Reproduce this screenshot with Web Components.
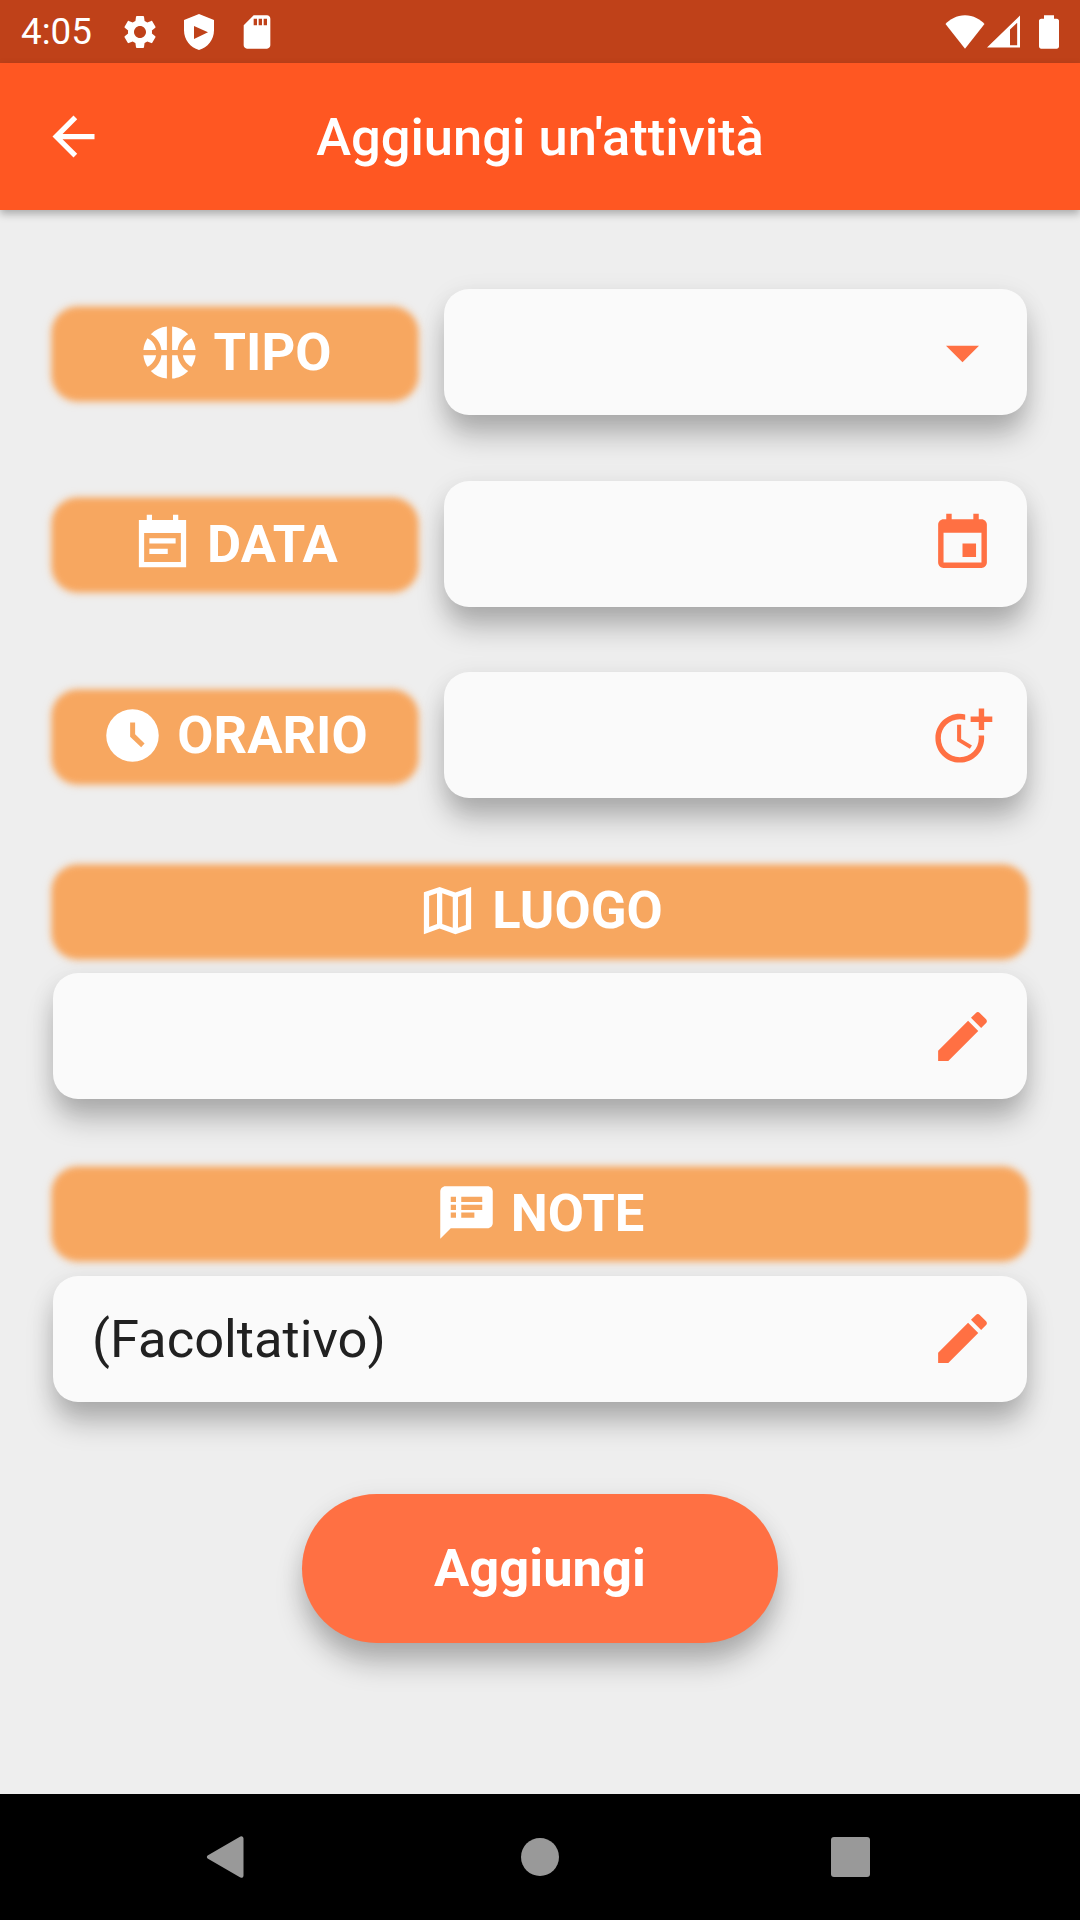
<!DOCTYPE html>
<html lang="it">
<head>
<meta charset="utf-8">
<title>Aggiungi un'attività</title>
<style>
  html, body { margin: 0; padding: 0; }
  body {
    width: 1080px;
    height: 1920px;
    overflow: hidden;
    display: flex;
    flex-direction: column;
    background: #eeeeee;
    font-family: Roboto, "Liberation Sans", sans-serif;
  }
  activity-form { flex: 1; }
</style>
</head>
<body>
<status-bar></status-bar>
<app-bar>Aggiungi un'attività</app-bar>
<activity-form>
  <form-row>
    <form-label icon="basketball" slot="label">TIPO</form-label>
    <form-field icon="dropdown" slot="field"></form-field>
  </form-row>
  <form-row>
    <form-label icon="eventnote" slot="label">DATA</form-label>
    <form-field icon="event" slot="field"></form-field>
  </form-row>
  <form-row>
    <form-label icon="clock" slot="label">ORARIO</form-label>
    <form-field icon="moretime" slot="field"></form-field>
  </form-row>
  <form-row stacked>
    <form-label icon="map" slot="label">LUOGO</form-label>
    <form-field icon="edit" slot="field"></form-field>
  </form-row>
  <form-row stacked>
    <form-label icon="notes" slot="label">NOTE</form-label>
    <form-field icon="edit" slot="field">(Facoltativo)</form-field>
  </form-row>
  <add-button>Aggiungi</add-button>
</activity-form>
<nav-bar></nav-bar>

<script>
'use strict';

const ICONS = {
  gear: 'M19.14 12.94c.04-.3.06-.61.06-.94 0-.32-.02-.64-.07-.94l2.03-1.58c.18-.14.23-.41.12-.61l-1.92-3.32c-.12-.22-.37-.29-.59-.22l-2.39.96c-.5-.38-1.03-.7-1.62-.94l-.36-2.54c-.04-.24-.24-.41-.48-.41h-3.84c-.24 0-.43.17-.47.41l-.36 2.54c-.59.24-1.13.57-1.62.94l-2.39-.96c-.22-.08-.47 0-.59.22L2.74 8.87c-.12.21-.08.47.12.61l2.03 1.58c-.05.3-.09.63-.09.94s.02.64.07.94l-2.03 1.58c-.18.14-.23.41-.12.61l1.92 3.32c.12.22.37.29.59.22l2.39-.96c.5.38 1.03.7 1.62.94l.36 2.54c.05.24.24.41.48.41h3.84c.24 0 .44-.17.47-.41l.36-2.54c.59-.24 1.13-.56 1.62-.94l2.39.96c.22.08.47 0 .59-.22l1.92-3.32c.12-.22.07-.47-.12-.61l-2.01-1.58zM12 15.6c-1.98 0-3.6-1.62-3.6-3.6s1.62-3.6 3.6-3.6 3.6 1.62 3.6 3.6-1.62 3.6-3.6 3.6z',
  shield: 'M12 1.2L3 4.800V11c0 5.500 3.800 10.600 9 11.800 5.200-1.200 9-6.300 9-11.800V4.800L12 1.200zM9 8.400l8.400 3.800L9 16.200V8.400z',
  sdcard: 'M18 2h-8L4.020 8 4 20c0 1.100.9 2 2 2h12c1.100 0 2-.9 2-2V4c0-1.100-.9-2-2-2zm-6 6h-2V4h2v4zm3 0h-2V4h2v4zm3 0h-2V4h2v4z',
  wifi: 'M12 22L.3 7.200C2.800 4.600 7 2 12 2s9.200 2.600 11.700 5.200L12 22z',
  signal: 'M2.400 21.300L22.200 2.100v19.200H2.400zM20.500 20V6.500L16.200 10.500V20h4.300z',
  battery: 'M16.700 4H15V2H9v2H7.300C6.600 4 6 4.600 6 5.300v15.300C6 21.400 6.600 22 7.300 22h9.300c.8 0 1.400-.6 1.400-1.300V5.300C18 4.600 17.400 4 16.700 4z',
  back: 'M20 11H7.830l5.590-5.590L12 4l-8 8 8 8 1.410-1.410L7.830 13H20v-2z',
  basketball: 'M17.090 11h4.860c-.16-1.610-.71-3.110-1.540-4.400-1.730.83-2.990 2.450-3.320 4.400zM6.910 11c-.33-1.950-1.590-3.570-3.320-4.400-.83 1.290-1.380 2.790-1.540 4.400h4.860zM15.070 11c.32-2.590 1.880-4.790 4.060-6-1.600-1.630-3.740-2.710-6.130-2.950V11h2.070zM8.930 11H11V2.050C8.610 2.290 6.460 3.370 4.870 5c2.180 1.210 3.740 3.410 4.060 6zM15.070 13H13v8.950c2.390-.24 4.540-1.320 6.130-2.950-2.180-1.210-3.740-3.410-4.060-6zM3.590 17.400c1.720-.83 2.990-2.460 3.320-4.400H2.050c.16 1.610.71 3.110 1.540 4.400zM17.090 13c.33 1.950 1.590 3.570 3.320 4.400.83-1.290 1.380-2.790 1.540-4.400h-4.860zM8.930 13c-.32 2.590-1.880 4.790-4.060 6 1.600 1.630 3.740 2.710 6.130 2.950V13H8.930z',
  eventnote: 'M17 10H7v2h10v-2zm4-7h-3V1h-2v2H8V1H6v2H3v18h18V3zm-2 16H5V8h14v11zm-5-5H7v2h7v-2z',
  clock: 'M12 2a10 10 0 1 0 0 20 10 10 0 0 0 0-20zM11.100 7H13v4.500l3.600 3.500-1.300 1.500-4.200-4V7z',
  map: 'M21 3l-6 2.100L9 3 3 5v16l6-2.100 6 2.100 6-2V3zM10 5.470l4 1.400v11.660l-4-1.400V5.470zm-5 .99l3-1.010v11.700l-3 1.160V6.460zm14 11.080l-3 1.010V6.860l3-1.160v11.840z',
  notes: 'M20 2H4c-1.100 0-1.990.9-1.990 2L2 22l4-4h14c1.100 0 2-.9 2-2V4c0-1.100-.9-2-2-2zM8 14H6v-2h2v2zm0-3H6V9h2v2zm0-3H6V6h2v2zm7 6h-5v-2h5v2zm3-3h-8V9h8v2zm0-3h-8V6h8v2z',
  dropdown: 'M5.900 9.500h12.200L12 15.600z',
  event: 'M17 12h-5v5h5v-5zM16 1v2H8V1H6v2H5c-1.110 0-1.990.9-1.990 2L3 19c0 1.100.89 2 2 2h14c1.100 0 2-.9 2-2V5c0-1.100-.9-2-2-2h-1V1h-2zm3 18H5V8h14v11z',
  moretime: 'M10 8v6l4.700 2.900.8-1.200-4-2.400V8zM17.920 12c.05.33.08.66.08 1 0 3.900-3.100 7-7 7s-7-3.100-7-7 3.100-7 7-7c.7 0 1.370.1 2 .29V4.230c-.64-.15-1.310-.23-2-.23-5 0-9 4-9 9s4 9 9 9 9-4 9-9c0-.34-.02-.67-.06-1h-2.020zM20 5V2h-2v3h-3v2h3v3h2V7h3V5z',
  edit: 'M3 17.250V21h3.750L17.810 9.940l-3.750-3.750L3 17.250zM20.710 7.040c.39-.39.39-1.020 0-1.410l-2.340-2.340c-.39-.39-1.020-.39-1.410 0l-1.830 1.830 3.750 3.750 1.830-1.830z'
};

const RAISED = '0 22px 28px -2px rgba(0, 0, 0, .25), 0 4px 24px rgba(0, 0, 0, .08)';

class AppIcon extends HTMLElement {
  constructor() {
    super();
    this.attachShadow({ mode: 'open' });
    const size = this.getAttribute('size') || 63;
    this.shadowRoot.innerHTML = `
      <style>
        :host { display: block; flex: none; width: ${size}px; height: ${size}px; }
        svg { display: block; width: 100%; height: 100%; fill: currentColor; }
      </style>
      <svg viewBox="0 0 24 24"><path fill-rule="evenodd" d="${ICONS[this.getAttribute('name')]}"></path></svg>
    `;
  }
}

class StatusBar extends HTMLElement {
  constructor() {
    super();
    this.attachShadow({ mode: 'open' });
    this.shadowRoot.innerHTML = `
      <style>
        :host {
          display: flex;
          flex: none;
          align-items: center;
          height: 63px;
          padding: 0 11px 0 21px;
          background: #bf4119;
          color: #ffffff;
          font-size: 36.8px;
        }
        .time { width: 99px; }
        .left { display: flex; gap: 18.500px; }
        .right { display: flex; align-items: center; margin-left: auto; gap: 6px; }
        .wifi { margin-right: -7.500px; }
      </style>
      <span class="time">4:05</span>
      <div class="left">
        <app-icon name="gear" size="40"></app-icon>
        <app-icon name="shield" size="40"></app-icon>
        <app-icon name="sdcard" size="40"></app-icon>
      </div>
      <div class="right">
        <app-icon class="wifi" name="wifi" size="40"></app-icon>
        <app-icon name="signal" size="40"></app-icon>
        <app-icon name="battery" size="40"></app-icon>
      </div>
    `;
  }
}

class AppBar extends HTMLElement {
  constructor() {
    super();
    this.attachShadow({ mode: 'open' });
    this.shadowRoot.innerHTML = `
      <style>
        :host {
          display: flex;
          flex: none;
          position: relative;
          align-items: center;
          height: 147px;
          padding-left: 42px;
          background: #ff5722;
          color: #ffffff;
          box-shadow: 0 4px 8px rgba(0, 0, 0, .28);
        }
        h1 {
          flex: 1;
          margin: 0 105px 0 0;
          text-align: center;
          font: 500 52.500px Roboto, sans-serif;
        }
      </style>
      <app-icon name="back" size="63"></app-icon>
      <h1><slot></slot></h1>
    `;
  }
}

class ActivityForm extends HTMLElement {
  constructor() {
    super();
    this.attachShadow({ mode: 'open' });
    this.shadowRoot.innerHTML = `
      <style>
        :host {
          display: flex;
          flex-direction: column;
          align-items: center;
          padding: 79px 53px 0;
        }
      </style>
      <slot></slot>
    `;
  }
}

class FormRow extends HTMLElement {
  constructor() {
    super();
    this.attachShadow({ mode: 'open' });
    this.shadowRoot.innerHTML = `
      <style>
        :host {
          display: grid;
          grid-template-columns: 364px 1fr;
          column-gap: 27px;
          align-items: center;
          width: 100%;
          margin-bottom: 65.500px;
        }
        :host([stacked]) {
          grid-template-columns: 1fr;
          row-gap: 16.500px;
          margin-bottom: 67px;
        }
      </style>
      <slot name="label"></slot>
      <slot name="field"></slot>
    `;
  }
}

class FormLabel extends HTMLElement {
  constructor() {
    super();
    this.attachShadow({ mode: 'open' });
    this.shadowRoot.innerHTML = `
      <style>
        :host {
          display: flex;
          position: relative;
          isolation: isolate;
          align-items: center;
          justify-content: center;
          gap: 13px;
          height: 93px;
          padding-right: 1px;
          color: #ffffff;
          font: 700 52.500px Roboto, sans-serif;
        }
        .glow {
          position: absolute;
          inset: 1px -1px -2px;
          z-index: -1;
          background: #f7a760;
          border-radius: 26px;
          box-shadow: 0 0 5px 1px rgba(247, 167, 96, .55);
          filter: blur(3px);
        }
      </style>
      <div class="glow"></div>
      <app-icon name="${this.getAttribute('icon')}"></app-icon>
      <span><slot></slot></span>
    `;
  }
}

class FormField extends HTMLElement {
  constructor() {
    super();
    this.attachShadow({ mode: 'open' });
    this.shadowRoot.innerHTML = `
      <style>
        :host {
          display: flex;
          align-items: center;
          height: 126px;
          padding: 0 32px 0 40px;
          background: #fafafa;
          border-radius: 25px;
          color: #ff7043;
          box-shadow: ${RAISED};
        }
        span {
          flex: 1;
          margin-left: -1px;
          color: #212121;
          font: 400 52.500px Roboto, sans-serif;
        }
      </style>
      <span><slot></slot></span>
      <app-icon name="${this.getAttribute('icon')}" size="65"></app-icon>
    `;
  }
}

class AddButton extends HTMLElement {
  constructor() {
    super();
    this.attachShadow({ mode: 'open' });
    this.shadowRoot.innerHTML = `
      <style>
        :host {
          display: flex;
          align-items: center;
          justify-content: center;
          width: 476px;
          height: 149px;
          margin-top: 25px;
          border-radius: 75px;
          background: #ff7043;
          color: #ffffff;
          font: 700 52.500px Roboto, sans-serif;
          box-shadow: ${RAISED};
        }
      </style>
      <slot></slot>
    `;
  }
}

class NavBar extends HTMLElement {
  constructor() {
    super();
    this.attachShadow({ mode: 'open' });
    this.shadowRoot.innerHTML = `
      <style>
        :host {
          display: grid;
          flex: none;
          grid-template-columns: repeat(3, 40px);
          justify-content: center;
          column-gap: 270px;
          align-items: center;
          justify-items: center;
          height: 126px;
          background: #000000;
        }
        svg { display: block; width: 40px; height: 42px; margin-right: 10px; fill: #999999; }
        .home { width: 38px; height: 38px; border-radius: 50%; background: #999999; }
        .recent { width: 39px; height: 40px; border-radius: 3px; background: #999999; }
      </style>
      <svg viewBox="0 0 40 42"><path d="M2.600 19.600L34.500.9c0 0 .1 0 0 0C36.500-.7 38.500.5 38.500 2.500v37c0 2-2 3.200-4 1.600L2.600 22.400c-1-.8-1-2 0-2.800z"></path></svg>
      <div class="home"></div>
      <div class="recent"></div>
    `;
  }
}

customElements.define('app-icon', AppIcon);
customElements.define('status-bar', StatusBar);
customElements.define('app-bar', AppBar);
customElements.define('activity-form', ActivityForm);
customElements.define('form-row', FormRow);
customElements.define('form-label', FormLabel);
customElements.define('form-field', FormField);
customElements.define('add-button', AddButton);
customElements.define('nav-bar', NavBar);
</script>
</body>
</html>
